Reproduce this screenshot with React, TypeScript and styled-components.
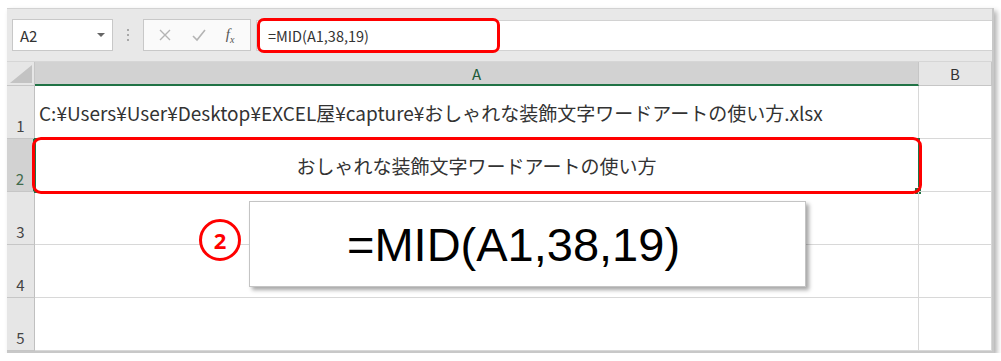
import React from "react";
import styled, { createGlobalStyle } from "styled-components";

const GlobalStyle = createGlobalStyle`
	body {
		margin: 0;
		background: #ffffff;
		font-family: "Noto Sans CJK JP", "Noto Sans", sans-serif;
	}
`;

const ROW_H = 53;
const rows = [1, 2, 3, 4, 5];
const cellText: Record<number, string> = {
	1: "C:¥Users¥User¥Desktop¥EXCEL屋¥capture¥おしゃれな装飾文字ワードアートの使い方.xlsx",
	2: "おしゃれな装飾文字ワードアートの使い方",
};

const App = () => {
	return (
		<Page>
			<GlobalStyle />
			<Window>
				<Toolbar>
					<NameBox>
						<span>A2</span>
						<DropArrow />
					</NameBox>
					<Grip>
						<i />
						<i />
						<i />
					</Grip>
					<FuncBox>
						<svg width="14" height="14" viewBox="0 0 14 14">
							<path d="M2 2 L12 12 M12 2 L2 12" stroke="#b4b4b4" strokeWidth="1.4" fill="none" />
						</svg>
						<svg width="16" height="14" viewBox="0 0 16 14">
							<path d="M2 8 L6 12 L14 2" stroke="#b4b4b4" strokeWidth="1.6" fill="none" />
						</svg>
						<Fx>
							f<sub>x</sub>
						</Fx>
					</FuncBox>
					<FormulaInput>=MID(A1,38,19)</FormulaInput>
				</Toolbar>

				<HeaderRow>
					<Corner>
						<svg width="22" height="18" viewBox="0 0 22 18">
							<polygon points="22,0 22,18 0,18" fill="#c3c3c3" />
						</svg>
					</Corner>
					<ColHead $selected>A</ColHead>
					<ColHead>B</ColHead>
				</HeaderRow>

				{rows.map((r) => (
					<GridRow key={r}>
						<RowHead $selected={r === 2}>{r}</RowHead>
						<Cell $align={r === 2 ? "center" : "left"} $active={r === 2}>
							{cellText[r]}
							{r === 2 && <FillHandle />}
						</Cell>
						<Cell />
					</GridRow>
				))}

				<FormulaMark />
				<CellMark />
				<StepBadge>2</StepBadge>
				<Callout>=MID(A1,38,19)</Callout>
			</Window>
		</Page>
	);
};

export default App;

const Page = styled.div`
	padding: 8px 0 0 7px;
	height: 353px;
	box-sizing: border-box;
`;

const Window = styled.div`
	position: relative;
	width: 985px;
	background: #ffffff;
	border-right: 2px solid #c8c8c8;
	border-bottom: 2px solid #c8c8c8;
	box-shadow: 3px 3px 5px rgba(0, 0, 0, 0.3);
`;

const Toolbar = styled.div`
	height: 54px;
	box-sizing: border-box;
	background: #e8e8e8;
	border-top: 1px solid #d2d2d2;
	border-bottom: 1px solid #d6d6d6;
	display: flex;
	align-items: center;
	padding: 0 0 0 5px;
`;

const NameBox = styled.div`
	width: 101px;
	height: 32px;
	box-sizing: border-box;
	background: #ffffff;
	border: 1px solid #c8c8c8;
	display: flex;
	align-items: center;
	justify-content: space-between;
	padding: 0 7px 0 7px;
	font-size: 15px;
	color: #333;
`;

const DropArrow = styled.span`
	width: 0;
	height: 0;
	border-left: 4px solid transparent;
	border-right: 4px solid transparent;
	border-top: 4px solid #666;
`;

const Grip = styled.div`
	width: 30px;
	display: flex;
	flex-direction: column;
	align-items: center;
	gap: 3px;
	i {
		width: 2px;
		height: 2px;
		background: #a8a8a8;
	}
`;

const FuncBox = styled.div`
	width: 108px;
	height: 32px;
	box-sizing: border-box;
	background: #fafafa;
	border: 1px solid #c8c8c8;
	display: flex;
	align-items: center;
	justify-content: space-around;
	padding: 0 6px 0 4px;
`;

const Fx = styled.span`
	font-family: "Liberation Serif", serif;
	font-style: italic;
	font-size: 15px;
	color: #555;
	sub {
		font-size: 10px;
	}
`;

const FormulaInput = styled.div`
	flex: 1;
	margin-left: 5px;
	height: 31px;
	box-sizing: border-box;
	background: #ffffff;
	border: 1px solid #d2d2d2;
	border-right: none;
	display: flex;
	align-items: center;
	padding-left: 11px;
	font-size: 14.5px;
	color: #333;
`;

const HeaderRow = styled.div`
	display: grid;
	grid-template-columns: 28px 884px 73px;
	height: 24px;
	background: #e6e6e6;
`;

const Corner = styled.div`
	display: flex;
	align-items: flex-end;
	justify-content: flex-end;
	padding: 0 2px 2px 0;
	border-right: 1px solid #c6c6c6;
	border-bottom: 1px solid #c6c6c6;
`;

const ColHead = styled.div<{ $selected?: boolean }>`
	display: flex;
	align-items: center;
	justify-content: center;
	font-size: 15px;
	color: ${(p) => (p.$selected ? "#205a36" : "#333")};
	background: ${(p) => (p.$selected ? "#d2d2d2" : "#e6e6e6")};
	border-right: 1px solid #c6c6c6;
	border-bottom: ${(p) => (p.$selected ? "2px solid #217346" : "1px solid #c6c6c6")};
	box-sizing: border-box;
`;

const GridRow = styled.div`
	display: grid;
	grid-template-columns: 28px 884px 73px;
	height: ${ROW_H}px;
`;

const RowHead = styled.div<{ $selected?: boolean }>`
	display: flex;
	align-items: flex-end;
	justify-content: center;
	padding-bottom: 2px;
	box-sizing: border-box;
	font-size: 15px;
	color: ${(p) => (p.$selected ? "#3f6a4c" : "#444")};
	background: ${(p) => (p.$selected ? "#d2d2d2" : "#e6e6e6")};
	border-right: ${(p) => (p.$selected ? "2px solid #217346" : "1px solid #c0c0c0")};
	border-bottom: 1px solid #c6c6c6;
`;

const Cell = styled.div<{ $align?: "left" | "center"; $active?: boolean }>`
	position: relative;
	display: flex;
	align-items: center;
	justify-content: ${(p) => (p.$align === "center" ? "center" : "flex-start")};
	padding: 0 4px;
	box-sizing: border-box;
	font-size: 19px;
	color: #333;
	white-space: nowrap;
	border-right: 1px solid #d8d8d8;
	border-bottom: 1px solid #d8d8d8;
	${(p) => p.$active && "outline: 2px solid #217346; outline-offset: -1px;"}
`;

const FillHandle = styled.span`
	position: absolute;
	right: -4px;
	bottom: -4px;
	width: 6px;
	height: 6px;
	background: #217346;
	border: 1px solid #ffffff;
`;

const FormulaMark = styled.div`
	position: absolute;
	left: 250px;
	top: 10px;
	width: 243px;
	height: 35px;
	box-sizing: border-box;
	border: 3px solid #ff0000;
	border-radius: 7px;
`;

const CellMark = styled.div`
	position: absolute;
	left: 25px;
	top: 129px;
	width: 890px;
	height: 57px;
	box-sizing: border-box;
	border: 3px solid #ff0000;
	border-radius: 9px;
`;

const StepBadge = styled.div`
	position: absolute;
	left: 192px;
	top: 211px;
	width: 42px;
	height: 42px;
	box-sizing: border-box;
	border: 3px solid #ff0000;
	border-radius: 50%;
	background: #ffffff;
	display: flex;
	align-items: center;
	justify-content: center;
	font-family: "Open Sans", "Liberation Sans", sans-serif;
	font-weight: 700;
	font-size: 22px;
	color: #ff0000;
`;

const Callout = styled.div`
	position: absolute;
	left: 242px;
	top: 193px;
	width: 557px;
	height: 86px;
	box-sizing: border-box;
	background: #ffffff;
	border: 1px solid #c4c4c4;
	box-shadow: 3px 3px 4px rgba(0, 0, 0, 0.35);
	display: flex;
	align-items: center;
	justify-content: center;
	font-family: "Liberation Sans", Arial, sans-serif;
	font-size: 47px;
	color: #000;
	padding-right: 28px;
`;
